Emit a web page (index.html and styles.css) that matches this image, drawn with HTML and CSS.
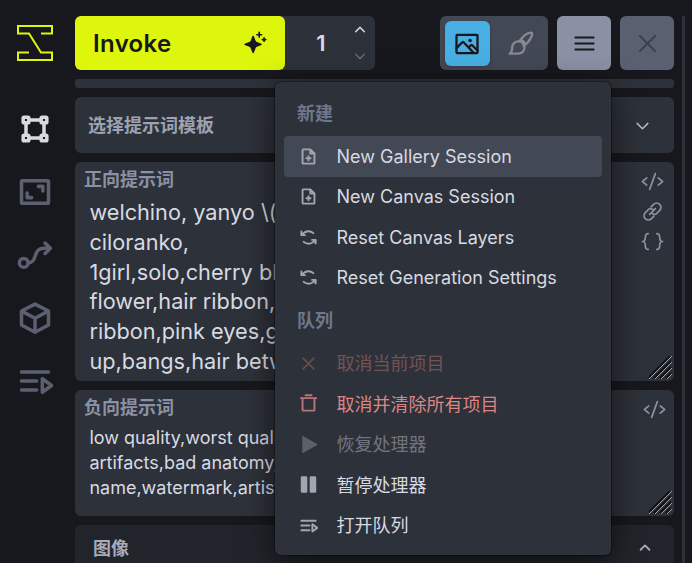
FILE: index.html
```html
<!DOCTYPE html>
<html lang="zh-CN">
<head>
<meta charset="utf-8">
<title>Invoke</title>
<link rel="stylesheet" href="styles.css">
</head>
<body>
<svg class="defs" aria-hidden="true">
  <symbol id="file-plus" viewBox="0 0 256 256"><path d="M200 224H56a8 8 0 0 1-8-8V40a8 8 0 0 1 8-8h96l56 56v128a8 8 0 0 1-8 8ZM152 32v56h56M128 124v56M100 152h56"/></symbol>
  <symbol id="refresh" viewBox="0 0 256 256"><path d="M80 96H32V48M176 160h48v48M32 96l29-27c37-34 95-34 132 0M224 160l-29 27c-37 34-95 34-132 0"/></symbol>
  <symbol id="queue" viewBox="0 0 256 256"><path d="M32 64h192M32 128h108M32 192h108M180 112v96l66-48Z"/></symbol>
  <symbol id="cross" viewBox="0 0 256 256"><path d="M200 56 56 200M200 200 56 56"/></symbol>
  <symbol id="down" viewBox="0 0 256 256"><path d="m208 96-80 80-80-80"/></symbol>
  <symbol id="up" viewBox="0 0 256 256"><path d="m48 160 80-80 80 80"/></symbol>
  <symbol id="code" viewBox="0 0 256 256"><path d="M64 88 16 128l48 40M192 88l48 40-48 40M160 40 96 216"/></symbol>
  <symbol id="grip" viewBox="0 0 23 23"><path class="grip-dark" d="M-1 22 22-1M5 22 22 5M11 22 22 11M17 22l5-5"/><path class="grip-light" d="M0 23 23 0M6 23 23 6M12 23 23 12M18 23l5-5"/></symbol>
</svg>
<div class="app">
  <nav class="sidebar">
    <svg class="logo" viewBox="0 0 36 36"><path d="M24 8.500h11V1H1v7.500h11L24 27.500h11V35H1v-7.500h11"/></svg>
    <svg class="nav-icon active" viewBox="0 0 256 256"><path d="M84 64h88M192 84v88M172 192H84M64 172V84"/><rect x="44" y="44" width="40" height="40" rx="6"/><rect x="172" y="44" width="40" height="40" rx="6"/><rect x="172" y="172" width="40" height="40" rx="6"/><rect x="44" y="172" width="40" height="40" rx="6"/></svg>
    <svg class="nav-icon" viewBox="0 0 256 256"><rect x="32" y="48" width="192" height="160" rx="8"/><path d="M152 88h32v32M104 168H72v-32"/></svg>
    <svg class="nav-icon" viewBox="0 0 256 256"><circle cx="48" cy="184" r="31"/><path d="M79 184c70 0 30-104 112-104h46M200 43l37 37-37 37"/></svg>
    <svg class="nav-icon" viewBox="0 0 256 256"><path d="M128 29 32 78v100l96 51 96-51V78ZM34 79l94 51 94-51M128 130v98"/></svg>
    <svg class="nav-icon"><use href="#queue"/></svg>
  </nav>
  <main class="panel">
    <div class="toolbar">
      <div class="queue-control">
        <button class="invoke"><span>Invoke</span>
          <svg class="sparkle" viewBox="0 0 256 256"><path d="M107 52Q114 45 121 52L139 99Q143 109 153 113L199 131Q205 137 199 144L153 162Q143 166 139 176L121 223Q114 231 107 223L89 176Q85 166 75 162L28 144Q21 137 28 131L75 113Q85 109 89 99Z"/><path class="line" d="M176 14v48M152 38h48M226 70v36M208 88h36"/></svg>
        </button>
        <div class="count">1</div>
        <div class="stepper"><svg><use href="#up"/></svg><svg class="dim"><use href="#down"/></svg></div>
      </div>
      <div class="actions">
        <div class="destination">
          <button class="dest selected"><svg viewBox="0 0 256 256"><rect x="32" y="44" width="192" height="168" rx="8"/><path d="m32 166 53-54a8 8 0 0 1 12 0l91 96M142 161l22-22a8 8 0 0 1 12 0l48 48"/><circle class="solid" cx="156" cy="96" r="16"/></svg></button>
          <button class="dest"><svg viewBox="0 0 256 256"><path d="M24 216h80a56 56 0 1 0-56-56c0 40-24 56-24 56ZM112 106c23-34 55-82 112-82 17 0-4 80-73 123M124 88c18 7 34 22 43 44"/></svg></button>
        </div>
        <button class="square menu-button"><svg viewBox="0 0 256 256"><path d="M42 128h172M42 70h172M42 186h172"/></svg></button>
        <button class="square close-button"><svg><use href="#cross"/></svg></button>
      </div>
    </div>
    <div class="progress"></div>
    <div class="template"><span>选择提示词模板</span><svg><use href="#down"/></svg></div>
    <section class="prompt positive">
      <h2>正向提示词</h2>
      <div class="copy">welchino, yanyo \(<br>ciloranko,<br>1girl,solo,cherry bl<br>flower,hair ribbon,<br>ribbon,pink eyes,g<br>up,bangs,hair betw</div>
      <div class="tools"><svg><use href="#code"/></svg><svg viewBox="0 0 256 256"><path d="m96 160 64-64M112 76l28-28a48 48 0 0 1 68 68l-28 28M144 180l-28 28a48 48 0 0 1-68-68l28-28M137 111a44 44 0 0 0-49-11l-20 20M119 145a44 44 0 0 0 49 11l20-20"/></svg><svg viewBox="0 0 256 256"><path d="M80 40c-64 0 0 88-64 88 64 0 0 88 64 88M176 40c64 0 0 88 64 88-64 0 0 88-64 88"/></svg></div>
      <svg class="grip"><use href="#grip"/></svg>
    </section>
    <section class="prompt negative">
      <h2>负向提示词</h2>
      <div class="copy">low quality,worst quali<br>artifacts,bad anatomy,<br>name,watermark,artist</div>
      <div class="tools"><svg><use href="#code"/></svg></div>
      <svg class="grip"><use href="#grip"/></svg>
    </section>
    <section class="accordion"><span>图像</span><svg><use href="#up"/></svg></section>
  </main>
  <div class="divider"></div>
</div>
<div class="menu" role="menu">
  <div class="heading">新建</div>
  <div class="item hover"><svg><use href="#file-plus"/></svg><span>New Gallery Session</span></div>
  <div class="item"><svg><use href="#file-plus"/></svg><span>New Canvas Session</span></div>
  <div class="item"><svg><use href="#refresh"/></svg><span>Reset Canvas Layers</span></div>
  <div class="item"><svg><use href="#refresh"/></svg><span>Reset Generation Settings</span></div>
  <div class="heading">队列</div>
  <div class="item danger disabled"><svg><use href="#cross"/></svg><span class="cjk">取消当前项目</span></div>
  <div class="item danger"><svg viewBox="0 0 256 256"><path d="M24 56h208M88 16h80M208 56v160a8 8 0 0 1-8 8H56a8 8 0 0 1-8-8V56"/></svg><span class="cjk">取消并清除所有项目</span></div>
  <div class="item disabled"><svg viewBox="0 0 256 256"><path class="solid" d="M52 12q-8-4-8 8v216q0 12 10 6l190-106q10-8 0-16Z"/></svg><span class="cjk">恢复处理器</span></div>
  <div class="item"><svg viewBox="0 0 256 256"><rect class="solid" x="24" y="18" width="88" height="220" rx="16"/><rect class="solid" x="144" y="18" width="88" height="220" rx="16"/></svg><span class="cjk">暂停处理器</span></div>
  <div class="item"><svg><use href="#queue"/></svg><span class="cjk">打开队列</span></div>
</div>
</body>
</html>
```

FILE: styles.css
```css
* { box-sizing: border-box; }
body {
  margin: 0;
  height: 563px;
  overflow: hidden;
  background: #17181d;
  color: #d8dae2;
  font-family: Inter, "Noto Sans CJK SC", sans-serif;
  font-size: 18px;
}
svg {
  display: block;
  flex: none;
  overflow: visible;
  fill: none;
  stroke: currentColor;
  stroke-width: 16;
  stroke-linecap: round;
  stroke-linejoin: round;
}
button {
  display: flex;
  align-items: center;
  justify-content: center;
  border: 0;
  padding: 0;
  font: inherit;
  color: #17181d;
}
.defs { position: absolute; width: 0; height: 0; }
.solid { fill: currentColor; stroke: none; }
.app { display: flex; height: 563px; }
.sidebar {
  width: 75px;
  padding: 25px 5px 0 0;
  display: flex;
  flex-direction: column;
  align-items: center;
  gap: 27px;
  color: #5b6070;
}
.logo { width: 36px; height: 36px; margin-bottom: 23px; color: #ddf60c; stroke-width: 2; stroke-linecap: butt; stroke-linejoin: miter; }
.nav-icon { width: 36px; height: 36px; stroke-width: 25; }
.active { color: #d8dae2; }
.panel {
  width: 599px;
  padding-top: 16px;
  display: flex;
  flex-direction: column;
  gap: 9px;
}
.divider { width: 3px; margin: 16px 0 0 8px; background: #2d3139; }
.toolbar { display: flex; justify-content: space-between; height: 54px; }
.queue-control { display: flex; width: 300px; border-radius: 6px; background: #2d3139; }
.invoke {
  width: 210px;
  padding: 0 18px;
  justify-content: space-between;
  border-radius: 6px;
  background: #ddf60c;
  font-size: 24px;
  font-weight: 600;
  letter-spacing: 0.35px;
}
.sparkle { width: 25px; height: 25px; fill: currentColor; stroke: none; }
.sparkle .line { stroke: currentColor; stroke-width: 17; }
.count { width: 72px; line-height: 54px; text-align: center; font-size: 22px; font-weight: 600; }
.stepper { display: flex; flex-direction: column; justify-content: space-between; padding: 7px 0; margin-left: -4px; }
.stepper svg { width: 14px; height: 14px; stroke-width: 26; }
.dim { color: #646873; }
.actions { display: flex; gap: 9px; }
.destination { display: flex; gap: 9px; width: 108px; padding: 5px; border-radius: 6px; background: #434855; }
.dest { width: 45px; height: 45px; border-radius: 6px; background: transparent; color: #868993; }
.dest svg { width: 28px; height: 28px; stroke-width: 21; }
.selected { background: #48afe3; color: #17181d; box-shadow: 0 1px 4px #0003; }
.square { width: 54px; height: 54px; border-radius: 6px; }
.square svg { width: 27px; height: 27px; stroke-width: 19; }
.menu-button { background: #8b91a4; }
.close-button { background: #5b6070; color: #3b3f4a; }
.progress { flex: none; height: 9px; border-radius: 3px; background: #2d3139; }
.template {
  display: flex;
  flex: none;
  justify-content: space-between;
  align-items: center;
  height: 56px;
  padding: 0 23px 2px 13px;
  border-radius: 6px;
  background: #2d3139;
  color: #9da2b1;
  font-weight: 700;
}
.template svg { width: 17px; height: 17px; margin-top: 2px; stroke-width: 22; color: #b9bcc8; }
.prompt { position: relative; flex: none; border-radius: 6px; background: #2d3139; }
.positive { height: 219px; }
.negative { height: 126px; }
.prompt h2 { margin: 0; padding: 6px 9px 0; font-size: 18px; line-height: 24px; font-weight: 700; color: #8b91a4; }
.copy { padding-left: 14.4px; white-space: nowrap; overflow: hidden; }
.positive .copy { padding-top: 6px; font-size: 21.7px; line-height: 29.8px; }
.negative .copy { padding-top: 5px; font-size: 18px; line-height: 25px; }
.tools { position: absolute; right: 10px; top: 8px; display: flex; flex-direction: column; gap: 7px; color: #8b91a4; }
.negative .tools { right: 8px; }
.tools svg { width: 23px; height: 23px; stroke-width: 19; }
.grip { position: absolute; width: 23px; height: 23px; right: 2px; bottom: 2px; overflow: hidden; }
.grip-dark, .grip-light { stroke-linecap: butt; }
.grip-dark { stroke: #101115; stroke-width: 1.8; }
.grip-light { stroke: #a5a5a5; stroke-width: 1; }
.accordion {
  display: flex;
  flex: none;
  justify-content: space-between;
  height: 60px;
  padding: 9px 22px 0 18px;
  border-radius: 6px 6px 0 0;
  background: #21242a;
  color: #a7abb9;
  font-weight: 700;
}
.accordion svg { width: 14px; height: 14px; margin-top: 7px; stroke-width: 34; }
.menu {
  position: absolute;
  left: 275px;
  top: 82px;
  width: 336px;
  height: 473px;
  padding: 9px;
  border-radius: 6px;
  background: #2d3139;
  box-shadow: 0 0 1px 1px #0005, 0 8px 32px #0009;
}
.heading { height: 45px; padding-left: 13px; line-height: 45px; font-weight: 700; color: #6d778c; }
.item { display: flex; align-items: center; height: 40.5px; padding-left: 15px; gap: 18.5px; border-radius: 4px; }
.item svg { width: 19px; height: 19px; stroke-width: 26; color: #a3a6b0; }
.cjk { padding-bottom: 2px; }
.hover { background: #434855; }
.danger, .danger svg { color: #dc8585; }
.danger svg { opacity: .8; }
.disabled { opacity: .4; }
```
